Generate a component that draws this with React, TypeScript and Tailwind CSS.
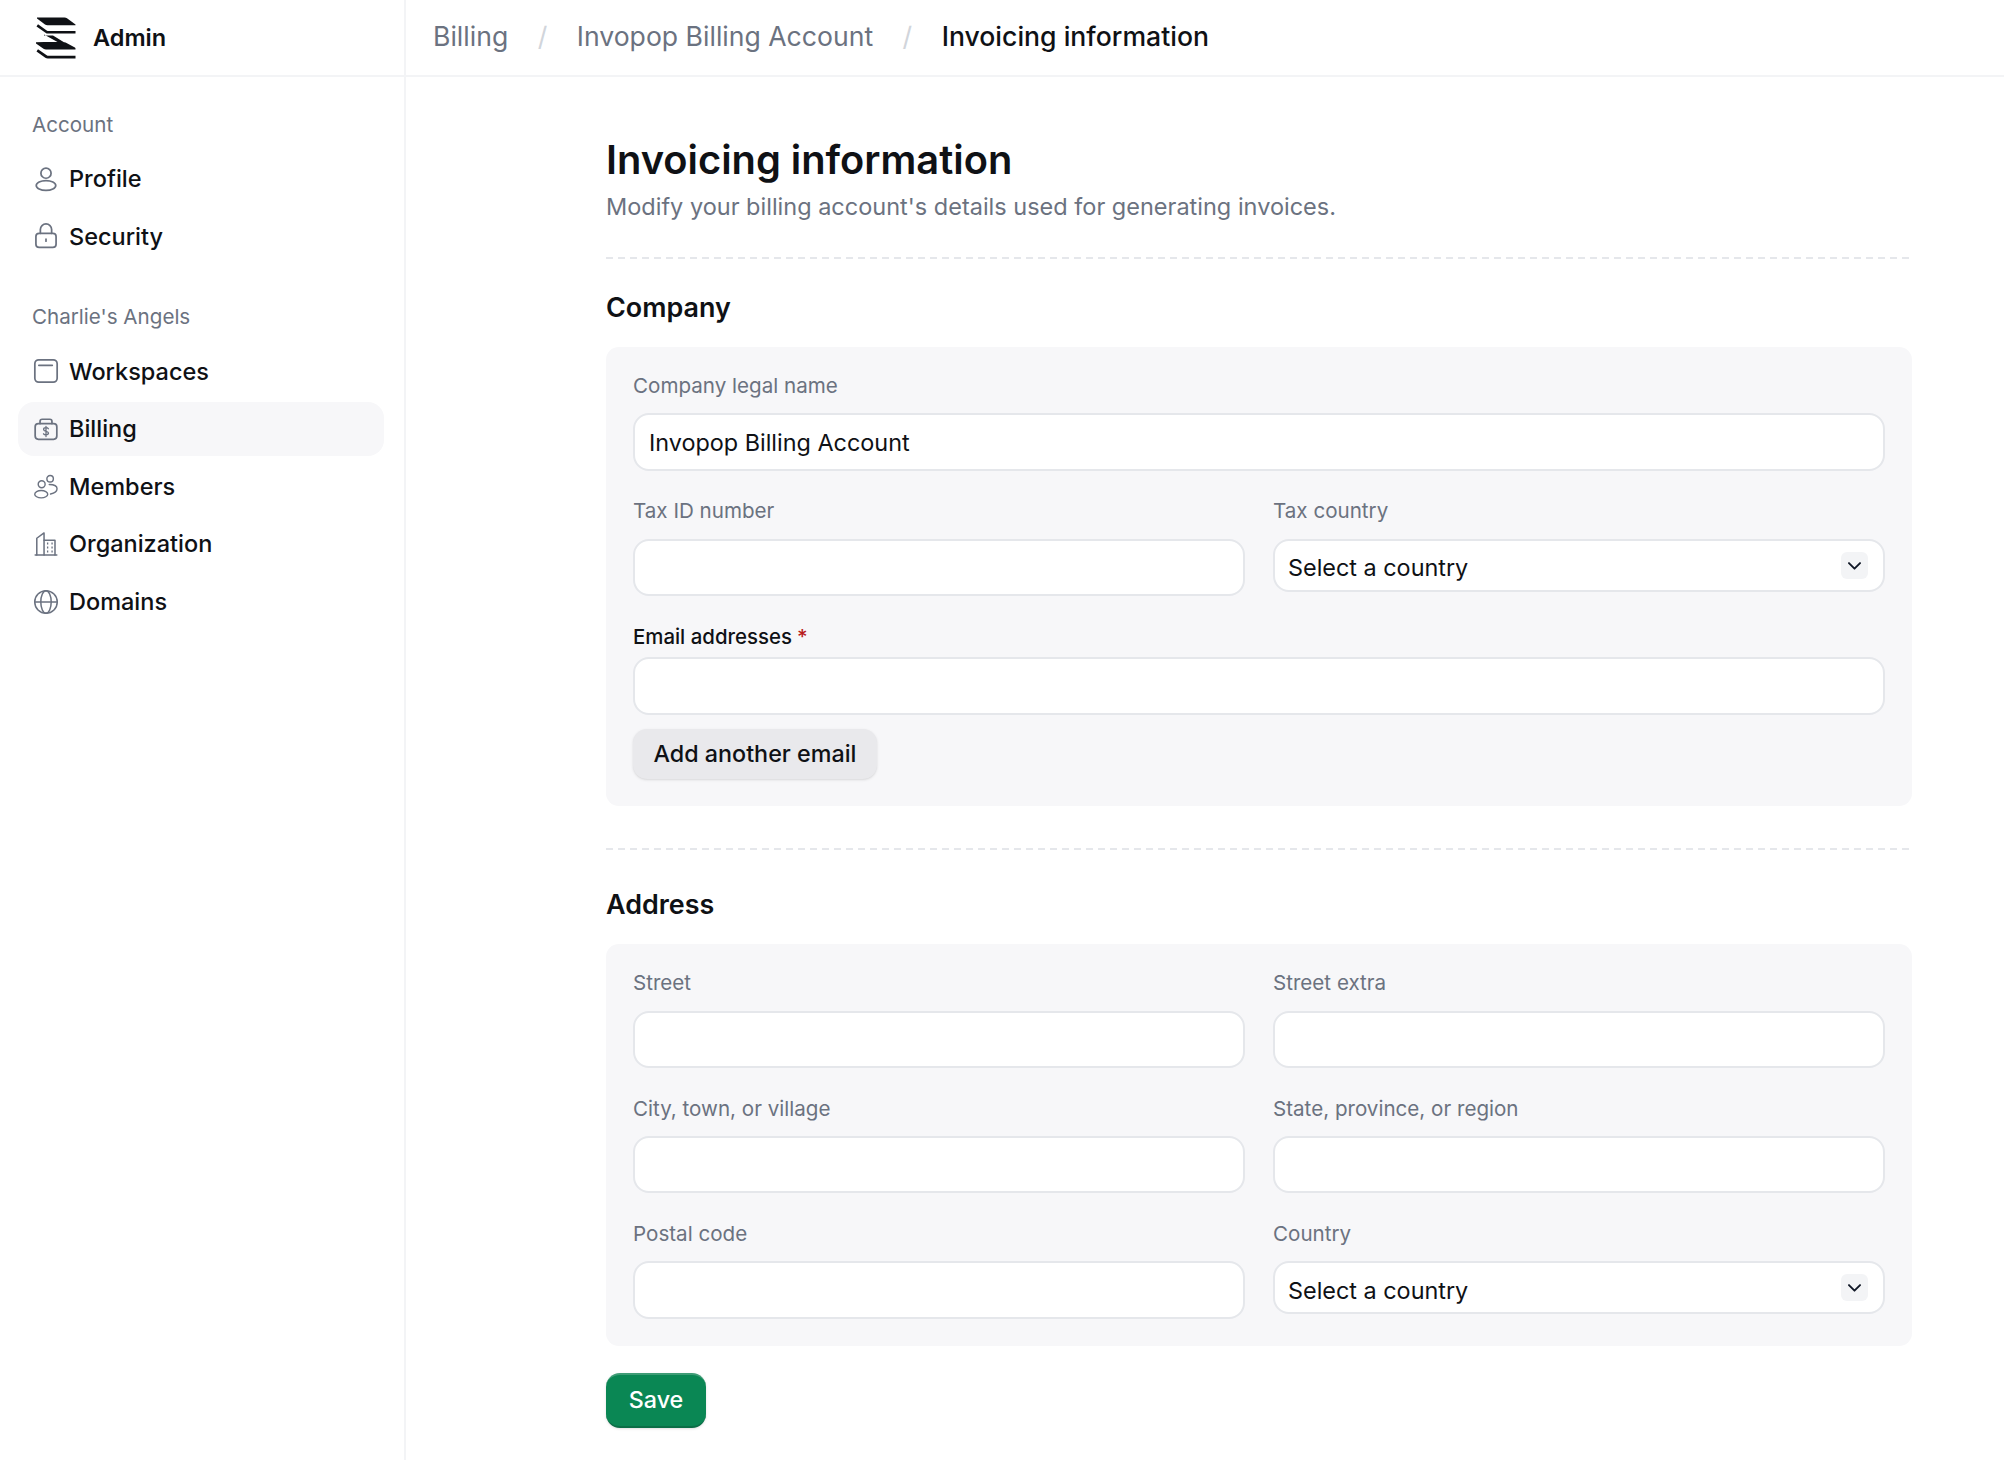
import React from "react";

const NAV_ICON = "w-[26px] h-[26px] shrink-0 text-[#6b7280]";

const ProfileIcon = () => (
  <svg viewBox="0 0 24 24" fill="none" stroke="currentColor" strokeWidth="1.6" className={NAV_ICON}>
    <circle cx="12" cy="6.6" r="4.7" />
    <ellipse cx="12" cy="18" rx="9" ry="4.6" />
  </svg>
);

const LockIcon = () => (
  <svg viewBox="0 0 24 24" fill="none" stroke="currentColor" strokeWidth="1.6" strokeLinecap="round" className={NAV_ICON}>
    <path d="M6.8 9.5V6a5.2 5.2 0 0 1 10.4 0v3.5" />
    <rect x="2.7" y="9.5" width="18.6" height="13" rx="3" />
    <path d="M12 14.8v2" />
  </svg>
);

const WorkspaceIcon = () => (
  <svg viewBox="0 0 24 24" fill="none" stroke="currentColor" strokeWidth="1.6" strokeLinecap="round" className={NAV_ICON}>
    <rect x="1.7" y="1.7" width="20.6" height="20.6" rx="3.6" />
    <path d="M5.4 6.7h12.4" />
  </svg>
);

const BillingIcon = () => (
  <svg viewBox="0 0 24 24" fill="none" stroke="currentColor" strokeWidth="1.6" strokeLinecap="round" strokeLinejoin="round" className={NAV_ICON}>
    <path d="M6.5 7V5a2 2 0 0 1 2-2h7a2 2 0 0 1 2 2v2" />
    <rect x="2" y="7" width="20" height="14.5" rx="3" />
    <path d="M14.2 11.8c-.4-.7-1.2-1-2.2-1-1.3 0-2.2.6-2.2 1.6 0 2.3 4.5 1.1 4.5 3.4 0 1-1 1.6-2.3 1.6-1 0-1.9-.4-2.3-1M12 9.6v9.4" strokeWidth="1.2" />
  </svg>
);

const MembersIcon = () => (
  <svg viewBox="0 0 24 24" fill="none" stroke="currentColor" strokeWidth="1.3" strokeLinecap="round" className={NAV_ICON}>
    <circle cx="8" cy="9.5" r="3.2" />
    <ellipse cx="7.6" cy="18.6" rx="6" ry="3.4" />
    <circle cx="15.8" cy="4.4" r="3" />
    <path d="M15 9.7c4 0 7.2 1.4 7.2 4 0 2.3-2.7 4.1-6 4.8" />
  </svg>
);

const OrganizationIcon = () => (
  <svg viewBox="0 0 24 24" fill="none" stroke="currentColor" strokeWidth="1.4" strokeLinecap="round" strokeLinejoin="round" className={NAV_ICON}>
    <path d="M2 22.2h20" />
    <path d="M3.5 22.2V6.7L10.2 1.8v20.4" />
    <path d="M10.2 8.5H20.3V22.2" />
    <path d="M12.9 11.6h1.2M17 11.6h1.2M12.9 15.2h1.2M17 15.2h1.2M12.9 19h1.2M17 19h1.2" strokeWidth="1.8" strokeLinecap="butt" />
  </svg>
);

const GlobeIcon = () => (
  <svg viewBox="0 0 24 24" fill="none" stroke="currentColor" strokeWidth="1.4" className={NAV_ICON}>
    <circle cx="12" cy="12" r="10.4" />
    <ellipse cx="12" cy="12" rx="4.8" ry="10.4" />
    <path d="M1.6 12h20.8" />
  </svg>
);

const Logo = () => (
  <svg viewBox="0 0 40 42" className="w-[40px] h-[42px] shrink-0" fill="#0f1115">
    <path d="M1 0.5h27.5c1 0 1.8.3 2.5.8l8.5 6.2v.8H11.5c-1 0-1.8-.2-2.5-.7L1 1.5z" />
    <path d="M0.5 9.5l9 6.3c.8.6 1.5.8 2.5.8h27.5V14H12.5c-.7 0-1.2-.2-1.8-.6L2 7.3z" />
    <path d="M8 17.5l13.5 7.5H8l-8 .2v1.3l7.5 5.3c.8.5 1.5.8 2.5.8h29.5v-1c0-.5-.2-.7-.6-1L30.5 26c-.7-.5-1.2-.7-2-.7h-.5L17 18.5h-9z" />
    <path d="M0.5 34.5l8.8 6.2c.8.6 1.5.8 2.5.8h27.7v-2.7H12.5c-.7 0-1.2-.2-1.8-.6L2 32.3z" />
  </svg>
);

const Chevron = () => (
  <span className="flex items-center justify-center w-[27px] h-[27px] rounded-[6px] bg-[#f3f4f6]">
    <svg viewBox="0 0 24 24" fill="none" stroke="#111827" strokeWidth="2.4" strokeLinecap="round" strokeLinejoin="round" className="w-[19px] h-[19px]">
      <path d="M5 9l7 7 7-7" />
    </svg>
  </span>
);

type NavEntry = { label: string; icon: React.ReactNode; active?: boolean };

const NavItem = ({ label, icon, active }: NavEntry) => (
  <a className={`flex items-center gap-[10px] h-[54.4px] pl-[15px] rounded-[16px] text-[23.5px] font-medium text-[#0f1115] ${active ? "bg-[#f7f7f9]" : ""}`}>
    {icon}
    <span>{label}</span>
  </a>
);

const Sidebar = () => (
  <aside className="w-[406px] shrink-0 border-r-2 border-[#f3f4f6] min-h-[1460px]">
    <div className="flex items-center gap-[17px] h-[77px] pl-[36px] border-b-2 border-[#f3f4f6]">
      <Logo />
      <span className="text-[23.5px] font-semibold text-[#0f1115]">Admin</span>
    </div>
    <nav className="pl-[18px] pr-[20px]">
      <p className="mt-[31px] mb-[10px] pl-[14px] text-[20.6px] leading-[33.6px] text-[#6b7280]">Account</p>
      <div className="flex flex-col gap-[3.2px]">
        <NavItem label="Profile" icon={<ProfileIcon />} />
        <NavItem label="Security" icon={<LockIcon />} />
      </div>
      <p className="mt-[36px] mb-[11px] pl-[14px] text-[20.6px] leading-[33.6px] text-[#6b7280]">Charlie's Angels</p>
      <div className="flex flex-col gap-[3.2px]">
        <NavItem label="Workspaces" icon={<WorkspaceIcon />} />
        <NavItem label="Billing" icon={<BillingIcon />} active />
        <NavItem label="Members" icon={<MembersIcon />} />
        <NavItem label="Organization" icon={<OrganizationIcon />} />
        <NavItem label="Domains" icon={<GlobeIcon />} />
      </div>
    </nav>
  </aside>
);

const Breadcrumbs = () => (
  <div className="flex items-center h-[77px] pl-[27px] pb-[2px] border-b-2 border-[#f3f4f6] text-[26.6px] text-[#6b7280]">
    <span>Billing</span>
    <span className="mx-[29.5px] text-[#d1d5db]">/</span>
    <span>Invopop Billing Account</span>
    <span className="mx-[29.5px] text-[#d1d5db]">/</span>
    <span className="font-medium text-[#0f1115]">Invoicing information</span>
  </div>
);

const Field = ({ label, dark, tight, required, children }: { label: string; dark?: boolean; tight?: boolean; required?: boolean; children: React.ReactNode }) => (
  <div>
    <label className={`block leading-[33.6px] ${tight ? "mb-[4px] text-[20.4px]" : "mb-[10.6px] text-[20.6px]"} ${dark ? "font-medium text-[#0f1115]" : "text-[#6b7280]"}`}>
      {label}
      {required && <span className="ml-[5px] text-[#b91c1c]">*</span>}
    </label>
    {children}
  </div>
);

const TextInput = ({ value }: { value?: string }) => (
  <input
    readOnly
    value={value ?? ""}
    className="block w-full h-[57.6px] px-[14px] rounded-[16px] border-2 border-[#e5e7eb] bg-white text-[23.4px] text-[#0f1115] outline-none"
  />
);

const SelectBox = () => (
  <div className="flex items-center justify-between h-[53px] pl-[13px] pr-[15px] rounded-[16px] border-2 border-[#e5e7eb] bg-white text-[23.4px] text-[#0f1115]">
    <span className="pt-[5px]">Select a country</span>
    <Chevron />
  </div>
);

const Divider = () => (
  <div className="h-[2px] mr-[2px] bg-[repeating-linear-gradient(to_right,#e5e7eb_0,#e5e7eb_7px,transparent_7px,transparent_12px)]" />
);

const Panel = ({ children }: { children: React.ReactNode }) => (
  <div className="flex flex-col gap-[23.5px] rounded-[12.8px] bg-[#f7f7f9] px-[27px] pt-[22.5px] pb-[27px]">{children}</div>
);

const TwoCols = ({ children }: { children: React.ReactNode }) => (
  <div className="grid grid-cols-2 gap-x-[28px]">{children}</div>
);

const Heading = ({ children }: { children: React.ReactNode }) => (
  <h2 className="text-[26.9px] leading-[40px] font-semibold text-[#0f1115]">{children}</h2>
);

export default function App() {
  return (
    <div className="flex w-[2004px] min-h-[1460px] bg-white font-['Inter',sans-serif] overflow-hidden">
      <Sidebar />
      <div className="flex-1">
        <Breadcrumbs />
        <main className="ml-[200px] w-[1306px] pt-[57px]">
          <h1 className="text-[39.8px] leading-[51.2px] font-semibold text-[#0f1115]">Invoicing information</h1>
          <p className="mt-[3px] text-[23.5px] leading-[38.4px] text-[#6b7280]">Modify your billing account's details used for generating invoices.</p>

          <div className="mt-[30px] mb-[28px]"><Divider /></div>

          <Heading>Company</Heading>
          <div className="mt-[20px]">
            <Panel>
              <Field label="Company legal name">
                <TextInput value="Invopop Billing Account" />
              </Field>
              <TwoCols>
                <Field label="Tax ID number"><TextInput /></Field>
                <Field label="Tax country"><SelectBox /></Field>
              </TwoCols>
              <Field label="Email addresses" dark tight required>
                <TextInput />
                <button className="mt-[14.5px] h-[49.5px] px-[20.5px] rounded-[14px] bg-[#e9e9ec] text-[23.3px] font-medium text-[#0f1115] shadow-sm">
                  Add another email
                </button>
              </Field>
            </Panel>
          </div>

          <div className="mt-[42px] mb-[34px]"><Divider /></div>

          <Heading>Address</Heading>
          <div className="mt-[20px]">
            <Panel>
              <TwoCols>
                <Field label="Street"><TextInput /></Field>
                <Field label="Street extra"><TextInput /></Field>
              </TwoCols>
              <TwoCols>
                <Field label="City, town, or village"><TextInput /></Field>
                <Field label="State, province, or region"><TextInput /></Field>
              </TwoCols>
              <TwoCols>
                <Field label="Postal code"><TextInput /></Field>
                <Field label="Country"><SelectBox /></Field>
              </TwoCols>
            </Panel>
          </div>

          <button className="mt-[27px] w-[100px] h-[55px] rounded-[14px] border-t-2 border-b-2 border-t-[#3f9c76] border-b-[#0a6e46] bg-[#0a8754] text-[23.3px] font-medium text-white shadow-sm">
            Save
          </button>
        </main>
      </div>
    </div>
  );
}
